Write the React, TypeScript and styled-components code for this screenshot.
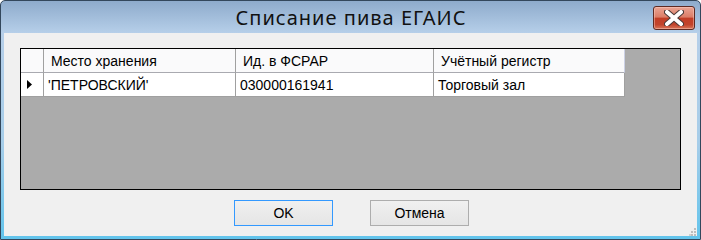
import React from "react";
import styled, { createGlobalStyle } from "styled-components";

const Global = createGlobalStyle`
  html, body { margin: 0; padding: 0; background: #ffffff; }
  * { box-sizing: border-box; }
`;

const Window = styled.div`
  width: 701px;
  height: 240px;
  display: flex;
  flex-direction: column;
  border: 1px solid #33475c;
  border-radius: 5px 5px 0 0;
  background: linear-gradient(
    to bottom,
    #8eabcc 0px,
    #b6cfe9 32px,
    #a6cde9 60%,
    #62c4ec 100%
  );
  overflow: hidden;
`;

const TitleBar = styled.div`
  height: 32px;
  flex: none;
  display: grid;
  grid-template-columns: 1fr auto 1fr;
  align-items: start;
`;

const Title = styled.div`
  grid-column: 2;
  padding-top: 4px;
  padding-left: 1px;
  font-family: "Noto Sans", "Open Sans", sans-serif;
  font-size: 20px;
  letter-spacing: 1px;
  line-height: 26px;
  color: #111;
  white-space: nowrap;
`;

const CloseButton = styled.div`
  grid-column: 3;
  justify-self: end;
  margin-top: 5px;
  margin-right: 5px;
  width: 42px;
  height: 24px;
  border: 1px solid #5e2a22;
  border-radius: 3px;
  background: linear-gradient(
    to bottom,
    #eaa594 0%,
    #dc7e68 45%,
    #c23e26 52%,
    #c2442c 80%,
    #d8765a 100%
  );
  box-shadow: inset 0 0 0 1px rgba(255, 210, 200, 0.45);
  display: flex;
  align-items: center;
  justify-content: center;
`;

const Client = styled.div`
  flex: 1;
  margin: 0 3px 3px 3px;
  background: #f0f0f0;
  padding: 15px 16px 0 16px;
  display: flex;
  flex-direction: column;
  position: relative;
`;

const Grid = styled.div`
  height: 142px;
  border: 1px solid #000;
  background: #ababab;
  display: grid;
  grid-template-columns: 23px 192px 198px 191px;
  grid-auto-rows: 24px;
  align-content: start;
  font-family: "Liberation Sans", Arial, sans-serif;
  font-size: 14px;
  color: #000;
`;

const Cell = styled.div<{ $header?: boolean; $pad?: number; $last?: boolean }>`
  display: flex;
  align-items: center;
  padding-left: ${(p) => p.$pad ?? 4}px;
  background: ${(p) => (p.$header ? "#fafafb" : "#ffffff")};
  border-right: 1px solid
    ${(p) => (p.$header && p.$last ? "#cdd2e6" : "#a0a0a0")};
  border-bottom: 1px solid ${(p) => (p.$header ? "#a9aab0" : "#a0a0a0")};
  white-space: nowrap;
  overflow: hidden;
`;

const RowHeader = styled(Cell)`
  padding-left: 6px;
`;

const Buttons = styled.div`
  display: flex;
  justify-content: center;
  gap: 37px;
  margin-top: 10px;
  padding-left: 2px;
`;

const Button = styled.div<{ $default?: boolean }>`
  width: 99px;
  height: 26px;
  border: 1px solid ${(p) => (p.$default ? "#3399ff" : "#adadad")};
  background: linear-gradient(to bottom, #f0f0f0, #e5e5e5);
  display: flex;
  align-items: center;
  justify-content: center;
  font-family: "Liberation Sans", Arial, sans-serif;
  font-size: 14px;
  color: #000;
`;

const Grip = styled.svg`
  position: absolute;
  right: 0;
  bottom: 0;
`;

const Arrow = () => (
  <svg width="5" height="9" viewBox="0 0 5 9">
    <path d="M0 0 L5 4.5 L0 9 Z" fill="#000" />
  </svg>
);

const CloseIcon = () => (
  <svg width="20" height="16" viewBox="0 0 20 16">
    <path
      d="M3 2 L17 14 M17 2 L3 14"
      stroke="#4b3a38"
      strokeWidth="6"
      strokeLinecap="round"
    />
    <path
      d="M3 2 L17 14 M17 2 L3 14"
      stroke="#ffffff"
      strokeWidth="4"
      strokeLinecap="round"
    />
  </svg>
);

export default function App() {
  return (
    <>
      <Global />
      <Window>
        <TitleBar>
          <Title>Списание пива ЕГАИС</Title>
          <CloseButton>
            <CloseIcon />
          </CloseButton>
        </TitleBar>
        <Client>
          <Grid>
            <RowHeader $header />
            <Cell $header $pad={7}>Место хранения</Cell>
            <Cell $header $pad={7}>Ид. в ФСРАР</Cell>
            <Cell $header $pad={7} $last>Учётный регистр</Cell>
            <RowHeader>
              <Arrow />
            </RowHeader>
            <Cell>'ПЕТРОВСКИЙ'</Cell>
            <Cell>030000161941</Cell>
            <Cell>Торговый зал</Cell>
          </Grid>
          <Buttons>
            <Button $default>OK</Button>
            <Button>Отмена</Button>
          </Buttons>
          <Grip width="8" height="8" viewBox="0 0 8 8">
            <rect x="5" y="0" width="2" height="2" fill="#bdbdbd" />
            <rect x="2" y="3" width="2" height="2" fill="#bdbdbd" />
            <rect x="5" y="3" width="2" height="2" fill="#bdbdbd" />
            <rect x="0" y="6" width="2" height="2" fill="#d0d0d0" />
            <rect x="2" y="6" width="2" height="2" fill="#bdbdbd" />
            <rect x="5" y="6" width="2" height="2" fill="#bdbdbd" />
          </Grip>
        </Client>
      </Window>
    </>
  );
}
